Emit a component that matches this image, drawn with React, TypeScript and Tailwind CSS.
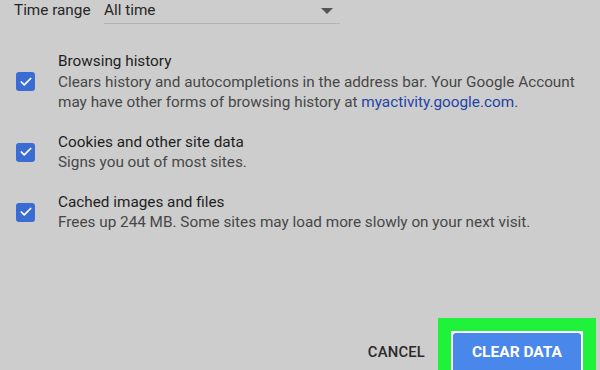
import { Check } from "lucide-react";

interface Item {
  title: string;
  lines: React.ReactNode[];
}

const items: Item[] = [
  {
    title: "Browsing history",
    lines: [
      "Clears history and autocompletions in the address bar. Your Google Account",
      <>
        may have other forms of browsing history at{" "}
        <span className="text-[#1f43a8]">myactivity.google.com</span>.
      </>,
    ],
  },
  {
    title: "Cookies and other site data",
    lines: ["Signs you out of most sites."],
  },
  {
    title: "Cached images and files",
    lines: ["Frees up 244 MB. Some sites may load more slowly on your next visit."],
  },
];

function Checkbox() {
  return (
    <div className="w-[19px] h-[19px] rounded-[3px] bg-[#3a6cd4] flex items-center justify-center shrink-0">
      <Check className="w-[14px] h-[14px] text-white" strokeWidth={3} />
    </div>
  );
}

export default function App() {
  return (
    <div
      className="w-[600px] h-[370px] overflow-hidden bg-[#cdcdcd] flex flex-col text-[15.3px] text-[#262626]"
      style={{ fontFamily: "Roboto, 'Liberation Sans', sans-serif" }}
    >
      <div className="flex items-start pl-[14px]">
        <span className="leading-[20px] w-[90px]">Time range</span>
        <div className="w-[236px] h-[24px] border-b border-[#b3b3b3] flex items-start justify-between pr-[7px]">
          <span className="leading-[20px]">All time</span>
          <svg width="12" height="6" viewBox="0 0 12 6" className="mt-[8px]">
            <path d="M0 0 L12 0 L6 6 Z" fill="#555" />
          </svg>
        </div>
      </div>

      <div className="flex flex-col gap-[19px] mt-[27px]">
        {items.map((item) => (
          <div key={item.title} className="flex items-center">
            <div className="w-[58px] pl-[16px]">
              <Checkbox />
            </div>
            <div className="leading-[20.5px]">
              <div className="text-[#1e1e1e]">{item.title}</div>
              {item.lines.map((line, i) => (
                <div key={i} className="text-[#474747]">
                  {line}
                </div>
              ))}
            </div>
          </div>
        ))}
      </div>

      <div className="flex-1" />

      <div className="flex items-end justify-end pr-[4px]">
        <span className="mb-[7px] mr-[13px] text-[14.8px] font-medium text-[#2a2a2a] tracking-[0.2px]">
          CANCEL
        </span>
        <div className="w-[158px] h-[52px] bg-[#1ff23a] pl-[13px] pr-[13px] pt-[13px]">
          <div className="h-full bg-white pt-[2px] px-[2px]">
            <div className="h-full rounded-t-[3px] bg-[#4a87ea] flex items-center justify-center text-white font-bold text-[15.5px] pt-[2px]">
              CLEAR DATA
            </div>
          </div>
        </div>
      </div>
    </div>
  );
}
